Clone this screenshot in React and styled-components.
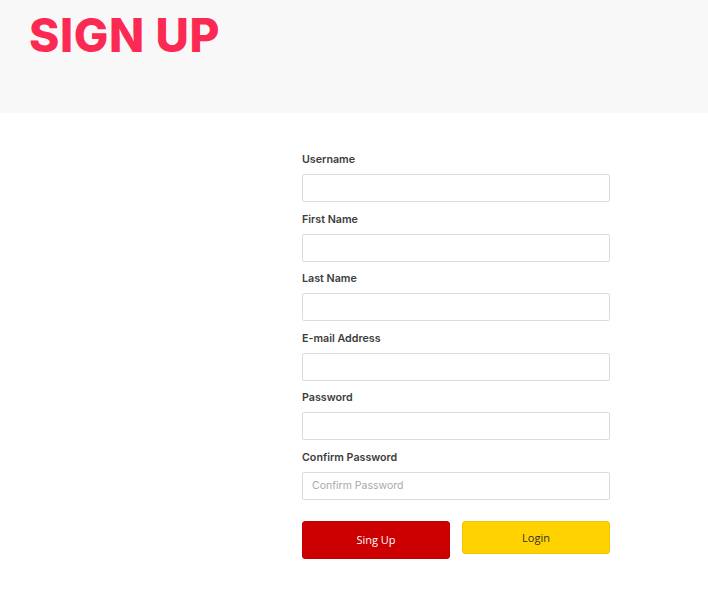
import React from "react";
import styled, { createGlobalStyle } from "styled-components";

const GlobalStyle = createGlobalStyle`
  body {
    margin: 0;
    background: #ffffff;
    font-family: "Open Sans", "Liberation Sans", sans-serif;
  }
`;

const Page = styled.div`
  width: 708px;
  min-height: 589px;
  background: #ffffff;
`;

const Header = styled.header`
  height: 113px;
  background: #f8f8f8;
  padding: 9px 0 0 29px;
  box-sizing: border-box;
`;

const Title = styled.h1`
  margin: 0;
  font-family: "Inter", "Open Sans", sans-serif;
  font-weight: 800;
  font-size: 46px;
  letter-spacing: 0.6px;
  line-height: 52px;
  color: #fc2a53;
`;

const Form = styled.form`
  width: 308px;
  margin: 40px 0 0 302px;
  display: flex;
  flex-direction: column;
`;

const Field = styled.div`
  display: flex;
  flex-direction: column;
  margin-bottom: 10.5px;
`;

const Label = styled.label`
  font-family: "Inter", "Open Sans", sans-serif;
  font-size: 10.7px;
  font-weight: 600;
  line-height: 13px;
  color: #3d3d3d;
  margin-bottom: 8px;
`;

const Input = styled.input`
  height: 28px;
  box-sizing: border-box;
  border: 1px solid #dcdcdc;
  border-radius: 2px;
  padding: 0 9px;
  font-family: "Inter", "Open Sans", sans-serif;
  font-size: 10.5px;
  color: #333;
  outline: none;

  &::placeholder {
    color: #a9a9a9;
  }
`;

const Buttons = styled.div`
  display: flex;
  align-items: flex-start;
  gap: 12px;
  margin-top: 10.5px;
`;

const Button = styled.button`
  width: 148px;
  height: ${(p) => p.$h}px;
  border: 1px solid ${(p) => p.$border};
  border-radius: 3px;
  background: ${(p) => p.$bg};
  color: ${(p) => p.$color};
  font-family: "Open Sans", "Liberation Sans", sans-serif;
  font-size: 11px;
  font-weight: 500;
  cursor: pointer;
  padding: 0;
`;

const fields = [
  { label: "Username" },
  { label: "First Name" },
  { label: "Last Name" },
  { label: "E-mail Address" },
  { label: "Password", type: "password" },
  { label: "Confirm Password", type: "password", placeholder: "Confirm Password" },
];

export default function App() {
  return (
    <Page>
      <GlobalStyle />
      <Header>
        <Title>SIGN UP</Title>
      </Header>
      <Form onSubmit={(e) => e.preventDefault()}>
        {fields.map((f) => (
          <Field key={f.label}>
            <Label>{f.label}</Label>
            <Input type={f.type || "text"} placeholder={f.placeholder} />
          </Field>
        ))}
        <Buttons>
          <Button $h={38} $bg="#cc0000" $border="#c20000" $color="#ffffff">
            Sing Up
          </Button>
          <Button $h={33} $bg="#ffd200" $border="#f0c400" $color="#2e2e2e">
            Login
          </Button>
        </Buttons>
      </Form>
    </Page>
  );
}
